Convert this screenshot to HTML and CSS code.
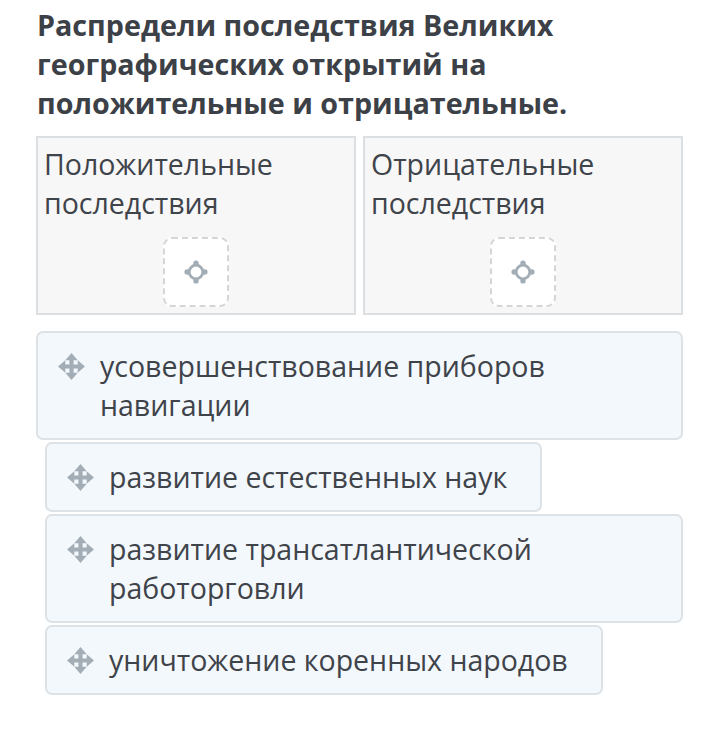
FILE: index.html
```html
<!DOCTYPE html>
<html lang="ru">
<head>
<meta charset="utf-8">
<link rel="stylesheet" href="styles.css">
</head>
<body>
<div class="page">
  <h1 class="title">Распредели последствия Великих географических открытий на положительные и отрицательные.</h1>
  <div class="groups">
    <div class="group">
      <div class="group-label">Положительные последствия</div>
      <div class="drop">
        <svg class="target" viewBox="0 0 24 24" width="26" height="26"><circle cx="12" cy="12" r="6.3" fill="none" stroke="#a3adb6" stroke-width="2.6"/><circle cx="12" cy="3.8" r="2.5" fill="#a3adb6"/><circle cx="12" cy="20.2" r="2.5" fill="#a3adb6"/><circle cx="3.8" cy="12" r="2.5" fill="#a3adb6"/><circle cx="20.2" cy="12" r="2.5" fill="#a3adb6"/></svg>
      </div>
    </div>
    <div class="group">
      <div class="group-label">Отрицательные последствия</div>
      <div class="drop">
        <svg class="target" viewBox="0 0 24 24" width="26" height="26"><circle cx="12" cy="12" r="6.3" fill="none" stroke="#a3adb6" stroke-width="2.6"/><circle cx="12" cy="3.8" r="2.5" fill="#a3adb6"/><circle cx="12" cy="20.2" r="2.5" fill="#a3adb6"/><circle cx="3.8" cy="12" r="2.5" fill="#a3adb6"/><circle cx="20.2" cy="12" r="2.5" fill="#a3adb6"/></svg>
      </div>
    </div>
  </div>
  <div class="items">
    <div class="item item-first">
      <svg class="move" viewBox="0 0 28 28" width="29" height="29"><path d="M14 1 L20 8 H16 V12 H20 V8 L27 14 L20 20 V16 H16 V20 H20 L14 27 L8 20 H12 V16 H8 V20 L1 14 L8 8 V12 H12 V8 H8 Z" fill="#a3adb6"/></svg>
      <span class="item-text">усовершенствование приборов навигации</span>
    </div>
    <div class="item">
      <svg class="move" viewBox="0 0 28 28" width="29" height="29"><path d="M14 1 L20 8 H16 V12 H20 V8 L27 14 L20 20 V16 H16 V20 H20 L14 27 L8 20 H12 V16 H8 V20 L1 14 L8 8 V12 H12 V8 H8 Z" fill="#a3adb6"/></svg>
      <span class="item-text">развитие естественных наук</span>
    </div>
    <div class="item">
      <svg class="move" viewBox="0 0 28 28" width="29" height="29"><path d="M14 1 L20 8 H16 V12 H20 V8 L27 14 L20 20 V16 H16 V20 H20 L14 27 L8 20 H12 V16 H8 V20 L1 14 L8 8 V12 H12 V8 H8 Z" fill="#a3adb6"/></svg>
      <span class="item-text">развитие трансатлантической работорговли</span>
    </div>
    <div class="item">
      <svg class="move" viewBox="0 0 28 28" width="29" height="29"><path d="M14 1 L20 8 H16 V12 H20 V8 L27 14 L20 20 V16 H16 V20 H20 L14 27 L8 20 H12 V16 H8 V20 L1 14 L8 8 V12 H12 V8 H8 Z" fill="#a3adb6"/></svg>
      <span class="item-text">уничтожение коренных народов</span>
    </div>
  </div>
</div>
</body>
</html>
```

FILE: styles.css
```css
html, body {
  margin: 0;
  padding: 0;
  background: #ffffff;
}

body {
  font-family: "Open Sans", "Noto Sans", sans-serif;
  color: #3f434a;
}

.page {
  padding: 5px 37px 0 36px;
}

.title {
  margin: 0 0 14px 0;
  padding-left: 1px;
  font-size: 28.7px;
  line-height: 39px;
  font-weight: 700;
  color: #3c4047;
}

.groups {
  display: grid;
  grid-template-columns: 1fr 1fr;
  gap: 7px;
}

.group {
  border: 2px solid #dcdfe1;
  background: #f7f7f7;
  padding: 7px 7px 6px 6px;
  display: flex;
  flex-direction: column;
  align-items: center;
}

.group-label {
  align-self: stretch;
  font-size: 28.5px;
  line-height: 39px;
  color: #3f434a;
}

.drop {
  margin-top: 14px;
  width: 62px;
  height: 66px;
  border: 2px dashed #d3d6d9;
  border-radius: 9px;
  background: #ffffff;
  display: flex;
  align-items: center;
  justify-content: center;
}

.items {
  margin-top: 16px;
  display: flex;
  flex-direction: column;
  align-items: flex-start;
  gap: 2px;
}

.item {
  display: flex;
  align-items: flex-start;
  margin-left: 9px;
  padding: 14px 33px 13px 19px;
  border: 2px solid #dde2e6;
  border-radius: 7px;
  background: #f3f8fc;
  box-sizing: border-box;
  max-width: calc(100% - 9px);
}

.item-first {
  margin-left: 0;
  max-width: 100%;
  width: 100%;
}

.move {
  flex: none;
  margin-top: 5px;
  margin-right: 14px;
}

.item-text {
  font-size: 28.5px;
  line-height: 39px;
  color: #3f434a;
}
```
